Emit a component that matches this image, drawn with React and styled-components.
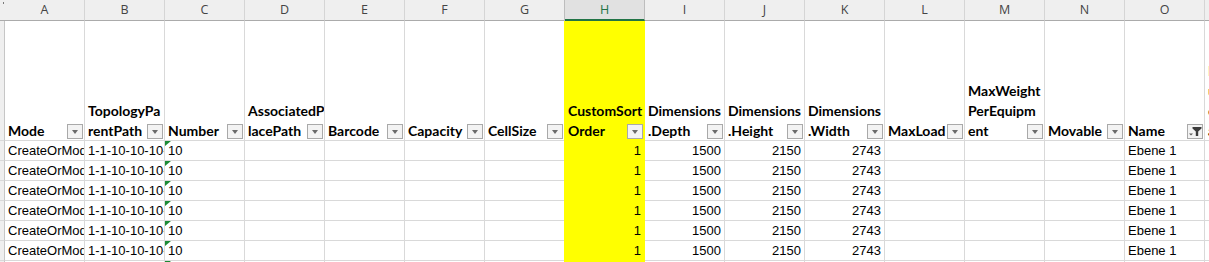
import styled, { createGlobalStyle } from "styled-components"

const GlobalStyle = createGlobalStyle`
  html, body {
    margin: 0;
    padding: 0;
    background: #ffffff;
  }
  body {
    width: 1209px;
    height: 262px;
    overflow: hidden;
  }
`

const GRID = "#d9d9d9"
const YELLOW = "#ffff00"

const Sheet = styled.div`
  display: grid;
  grid-template-columns: 5px repeat(15, 80px) 80px;
  grid-template-rows: 21px 120px repeat(7, 20px);
  width: 1209px;
  height: 262px;
  overflow: hidden;
`

const Corner = styled.div`
  position: relative;
  background: #efefef;
  border-bottom: 1px solid #ababab;
  &::after {
    content: "";
    position: absolute;
    left: 3px;
    top: 2px;
    width: 1px;
    height: 2px;
    background: #7a7a7a;
  }
`

const RowHead = styled.div`
  background: #efefef;
  border-right: 1px solid #c6c6c6;
  border-bottom: 1px solid ${GRID};
`

const Letter = styled.div`
  box-sizing: border-box;
  background: ${(p) => (p.$selected ? "#e1e1e1" : "#efefef")};
  border-right: 1px solid ${(p) => (p.$selected ? "#bdbdbd" : "#d5d5d5")};
  border-bottom: ${(p) => (p.$selected ? "2px solid #217346" : "1px solid #ababab")};
  box-shadow: ${(p) => (p.$selected ? "-1px 0 0 #bdbdbd" : "none")};
  color: ${(p) => (p.$selected ? "#217346" : "#444444")};
  font-family: "Open Sans", "Liberation Sans", sans-serif;
  font-size: 12.5px;
  line-height: 20px;
  text-align: center;
`

const HeadCell = styled.div`
  position: relative;
  box-sizing: border-box;
  display: flex;
  flex-direction: column;
  justify-content: flex-end;
  overflow: hidden;
  padding: 0 0 0 3px;
  background: ${(p) => (p.$fill ? YELLOW : "#ffffff")};
  border-right: 1px solid ${(p) => (p.$fill ? YELLOW : GRID)};
  border-bottom: 1px solid ${(p) => (p.$fill ? YELLOW : GRID)};
  box-shadow: ${(p) => (p.$fill ? `-1px 0 0 ${YELLOW}` : "none")};
  font-family: "Lato", "Liberation Sans", sans-serif;
  font-weight: 700;
  font-size: 14px;
  line-height: 20px;
  color: #000000;
`

const HeadLines = styled.div`
  margin-bottom: -1px;
`

const HeadLine = styled.span`
  display: block;
  white-space: nowrap;
  color: ${(p) => p.$color || "#000000"};
`

const FilterButton = styled.span`
  position: absolute;
  right: 1px;
  bottom: 1px;
  box-sizing: border-box;
  width: 16px;
  height: 15px;
  display: flex;
  align-items: center;
  justify-content: center;
  background: #f3f3f3;
  border: 1px solid #a9a9a9;
`

const Arrow = styled.span`
  width: 0;
  height: 0;
  margin-top: 1px;
  border-left: 3.5px solid transparent;
  border-right: 3.5px solid transparent;
  border-top: 4px solid #6a6a6a;
`

const Cell = styled.div`
  position: relative;
  box-sizing: border-box;
  overflow: hidden;
  white-space: nowrap;
  padding: 1px 3px 0 3px;
  background: ${(p) => (p.$fill ? YELLOW : "#ffffff")};
  border-right: 1px solid ${(p) => (p.$fill ? YELLOW : GRID)};
  border-bottom: 1px solid ${(p) => (p.$fill ? YELLOW : GRID)};
  box-shadow: ${(p) => (p.$fill ? `-1px 0 0 ${YELLOW}` : "none")};
  text-align: ${(p) => p.$align || "left"};
  font-family: "Liberation Sans Narrow", "Liberation Sans", Arial, sans-serif;
  font-size: 13px;
  line-height: 18px;
  color: #000000;
`

const TextFlag = styled.span`
  position: absolute;
  left: 0;
  top: 0;
  width: 0;
  height: 0;
  border-top: 5px solid #1b8a34;
  border-right: 6px solid transparent;
`

const FunnelIcon = () => (
  <svg width="14" height="13" viewBox="0 0 14 13">
    <polygon points="4.5,2 13.5,2 13.5,3.5 10.2,6.5 10.2,11 7.8,11 7.8,6.5 4.5,3.5" fill="#3c3c3c" />
    <polygon points="1,8.5 5,8.5 3,10.5" fill="#5a5a5a" />
  </svg>
)

const columns = [
  { letter: "A", head: ["Mode"] },
  { letter: "B", head: ["TopologyPa", "rentPath"] },
  { letter: "C", head: ["Number"] },
  { letter: "D", head: ["AssociatedP", "lacePath"] },
  { letter: "E", head: ["Barcode"] },
  { letter: "F", head: ["Capacity"] },
  { letter: "G", head: ["CellSize"] },
  { letter: "H", head: ["CustomSort", "Order"], fill: true, selected: true },
  { letter: "I", head: ["Dimensions", ".Depth"] },
  { letter: "J", head: ["Dimensions", ".Height"] },
  { letter: "K", head: ["Dimensions", ".Width"] },
  { letter: "L", head: ["MaxLoad"] },
  { letter: "M", head: ["MaxWeight", "PerEquipm", "ent"] },
  { letter: "N", head: ["Movable"] },
  { letter: "O", head: ["Name"], filtered: true },
  {
    letter: "P",
    head: [
      { text: "Lagerung", color: "#c55a11" },
      { text: "ung", color: "#843c0c" },
      { text: "ebene", color: "#5b3a1e" },
      { text: "art" },
    ],
    noButton: true,
  },
]

const row = {
  A: { text: "CreateOrModify" },
  B: { text: "1-1-10-10-10-10" },
  C: { text: "10", flag: true },
  H: { text: "1", align: "right" },
  I: { text: "1500", align: "right" },
  J: { text: "2150", align: "right" },
  K: { text: "2743", align: "right" },
  O: { text: "Ebene 1" },
}

const rows = Array.from({ length: 7 }, () => row)

const App = () => {
  return (
    <>
      <GlobalStyle />
      <Sheet>
        <Corner />
        {columns.map((c) => (
          <Letter key={c.letter} $selected={c.selected}>
            {c.letter === "P" ? "" : c.letter}
          </Letter>
        ))}

        <RowHead />
        {columns.map((c) => (
          <HeadCell key={c.letter} $fill={c.fill}>
            <HeadLines>
              {c.head.map((line, i) =>
                typeof line === "string" ? (
                  <HeadLine key={i}>{line}</HeadLine>
                ) : (
                  <HeadLine key={i} $color={line.color}>
                    {line.text}
                  </HeadLine>
                )
              )}
            </HeadLines>
            {!c.noButton && (
              <FilterButton>{c.filtered ? <FunnelIcon /> : <Arrow />}</FilterButton>
            )}
          </HeadCell>
        ))}

        {rows.map((r, ri) => [
          <RowHead key={`rh${ri}`} />,
          ...columns.map((c) => {
            const v = r[c.letter]
            return (
              <Cell key={`${ri}${c.letter}`} $fill={c.fill} $align={v && v.align}>
                {v && v.flag && <TextFlag />}
                {v ? v.text : ""}
              </Cell>
            )
          }),
        ])}
      </Sheet>
    </>
  )
}

export default App
